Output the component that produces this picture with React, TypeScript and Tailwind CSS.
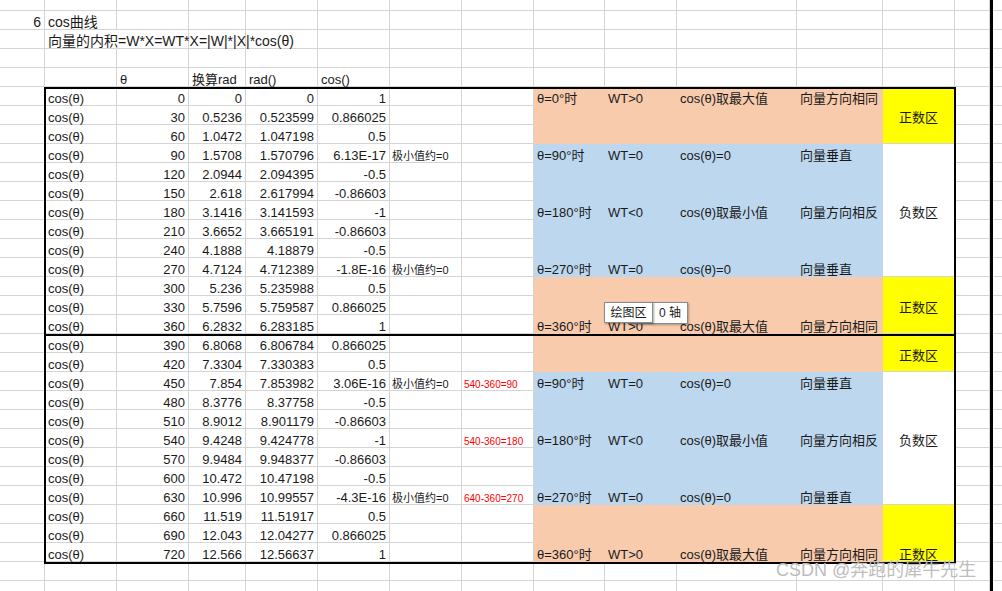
import React from 'react'

const W = [45, 72, 72, 57, 72, 72, 72, 72, 71, 72, 120, 86, 72, 35]
const GRID = 'border-[#d4d4d4]'

type Cell = { t?: string; right?: boolean; bg?: string; cls?: string; inner?: string; noB?: boolean; noR?: boolean }

const DATA: [number, string, string, string][] = [
  [0, '0', '0', '1'], [30, '0.5236', '0.523599', '0.866025'], [60, '1.0472', '1.047198', '0.5'],
  [90, '1.5708', '1.570796', '6.13E-17'], [120, '2.0944', '2.094395', '-0.5'], [150, '2.618', '2.617994', '-0.86603'],
  [180, '3.1416', '3.141593', '-1'], [210, '3.6652', '3.665191', '-0.86603'], [240, '4.1888', '4.18879', '-0.5'],
  [270, '4.7124', '4.712389', '-1.8E-16'], [300, '5.236', '5.235988', '0.5'], [330, '5.7596', '5.759587', '0.866025'],
  [360, '6.2832', '6.283185', '1'], [390, '6.8068', '6.806784', '0.866025'], [420, '7.3304', '7.330383', '0.5'],
  [450, '7.854', '7.853982', '3.06E-16'], [480, '8.3776', '8.37758', '-0.5'], [510, '8.9012', '8.901179', '-0.86603'],
  [540, '9.4248', '9.424778', '-1'], [570, '9.9484', '9.948377', '-0.86603'], [600, '10.472', '10.47198', '-0.5'],
  [630, '10.996', '10.99557', '-4.3E-16'], [660, '11.519', '11.51917', '0.5'], [690, '12.043', '12.04277', '0.866025'],
  [720, '12.566', '12.56637', '1'],
]

const NOTE: Record<number, string> = { 3: '极小值约=0', 9: '极小值约=0', 15: '极小值约=0', 21: '极小值约=0' }
const RED: Record<number, string> = { 15: '540-360=90', 18: '540-360=180', 21: '640-360=270' }

const MAX = ['θ=360°时', 'WT>0', 'cos(θ)取最大值', '向量方向相同']
const ZERO = (d: number) => [`θ=${d}°时`, 'WT=0', 'cos(θ)=0', '向量垂直']
const MIN = ['θ=180°时', 'WT<0', 'cos(θ)取最小值', '向量方向相反']
const INFO: Record<number, string[]> = {
  0: ['θ=0°时', 'WT>0', 'cos(θ)取最大值', '向量方向相同'],
  3: ZERO(90), 6: MIN, 9: ZERO(270), 12: MAX, 15: ZERO(90), 18: MIN, 21: ZERO(270), 24: MAX,
}

const PEACH = 'bg-[#f8cbad]'
const BLUE = 'bg-[#bdd7ee]'
const YELLOW = 'bg-[#ffff00]'

function fillOf(i: number) {
  if (i <= 2 || (i >= 10 && i <= 14) || i >= 22) return PEACH
  return BLUE
}

function mCell(i: number): Cell {
  const yellow = i <= 2 || (i >= 10 && i <= 14) || i >= 22
  const ends = [2, 9, 12, 14, 21, 24]
  const text: Record<number, string> = { 1: '正数区', 6: '负数区', 11: '正数区', 13: '正数区', 18: '负数区', 24: '正数区' }
  return {
    t: text[i],
    bg: yellow ? YELLOW : 'bg-white',
    noB: !ends.includes(i),
    cls: 'justify-center',
    inner: i === 13 ? 'translate-y-[10px] relative z-10' : undefined,
  }
}

function tableRow(i: number): Cell[] {
  const [d, a, b, c] = DATA[i]
  const bg = fillOf(i)
  const info = INFO[i] ?? []
  return [
    {},
    { t: 'cos(θ)' },
    { t: String(d), right: true },
    { t: a, right: true },
    { t: b, right: true },
    { t: c, right: true },
    { t: NOTE[i], cls: 'text-[11px] pl-[2px]' },
    { t: RED[i], cls: 'text-[10px] text-[#ff0000] pl-[2px]' },
    ...info.concat(['', '', '', '']).slice(0, 4).map((t) => ({ t, bg, noB: true, noR: true })),
    mCell(i),
    {},
  ]
}

function SheetRow({ cells, h = 'h-[19px]' }: { cells: Cell[]; h?: string }) {
  return (
    <div className={`flex ${h}`}>
      {W.map((w, k) => {
        const c = cells[k] ?? {}
        const border = c.bg
          ? `${c.noB ? 'border-b-transparent' : 'border-b-[#d4d4d4]'} ${c.noR ? 'border-r-transparent' : 'border-r-[#d4d4d4]'}`
          : GRID
        return (
          <div
            key={k}
            style={{ width: w }}
            className={`relative shrink-0 flex items-end whitespace-nowrap border-r border-b pb-0 px-[3px] ${border} ${c.bg ?? ''} ${c.right ? 'justify-end' : ''} ${c.cls ?? ''}`}
          >
            {c.inner ? <span className={c.inner}>{c.t}</span> : c.t}
          </div>
        )
      })}
      <div className="w-[3px] shrink-0 bg-black" />
      <div className="flex-1 border-b border-[#d4d4d4]" />
    </div>
  )
}

export default function App() {
  return (
    <div
      className="relative w-[1002px] h-[591px] overflow-hidden bg-white text-[13px] leading-none text-[#1a1a1a]"
      style={{ fontFamily: '"Liberation Sans", "Noto Sans CJK SC", sans-serif' }}
    >
      <SheetRow cells={[]} h="h-[11px]" />
      <SheetRow cells={[{ t: '6', right: true, cls: 'text-[14px]' }, { t: 'cos曲线', cls: 'text-[14px]' }]} />
      <SheetRow cells={[{}, { t: '向量的内积=W*X=WT*X=|W|*|X|*cos(θ)', cls: 'text-[14px] z-10 border-r-transparent' }]} />
      <SheetRow cells={[]} />
      <SheetRow cells={[{}, {}, { t: 'θ' }, { t: '换算rad', cls: 'z-10' }, { t: 'rad()' }, { t: 'cos()' }]} />
      {DATA.map((_, i) => (
        <SheetRow key={i} cells={tableRow(i)} />
      ))}
      <SheetRow cells={[]} />
      <SheetRow cells={[]} />

      {/* thick table borders */}
      <div className="absolute left-[44px] top-[87px] w-[912px] h-[2px] bg-black" />
      <div className="absolute left-[44px] top-[334px] w-[912px] h-[2px] bg-black" />
      <div className="absolute left-[44px] top-[562px] w-[912px] h-[2px] bg-black" />
      <div className="absolute left-[44px] top-[87px] w-[2px] h-[477px] bg-black" />
      <div className="absolute left-[954px] top-[87px] w-[2px] h-[477px] bg-black" />

      {/* chart tooltips */}
      <div className="absolute left-[628px] top-[302px] w-[60px] h-[22px] bg-white border border-[#8a8a8a] shadow-[1px_1px_2px_rgba(0,0,0,0.3)] flex items-center justify-end pr-[6px] text-[12px]">
        0 轴
      </div>
      <div className="absolute left-[604px] top-[302px] w-[49px] h-[21px] bg-white border border-[#8a8a8a] shadow-[1px_1px_2px_rgba(0,0,0,0.35)] flex items-center justify-center text-[12px]">
        绘图区
      </div>

      <div className="absolute left-[776px] top-[561px] text-[18px] text-[#bdbdbd]">CSDN @奔跑的犀牛先生</div>
    </div>
  )
}
